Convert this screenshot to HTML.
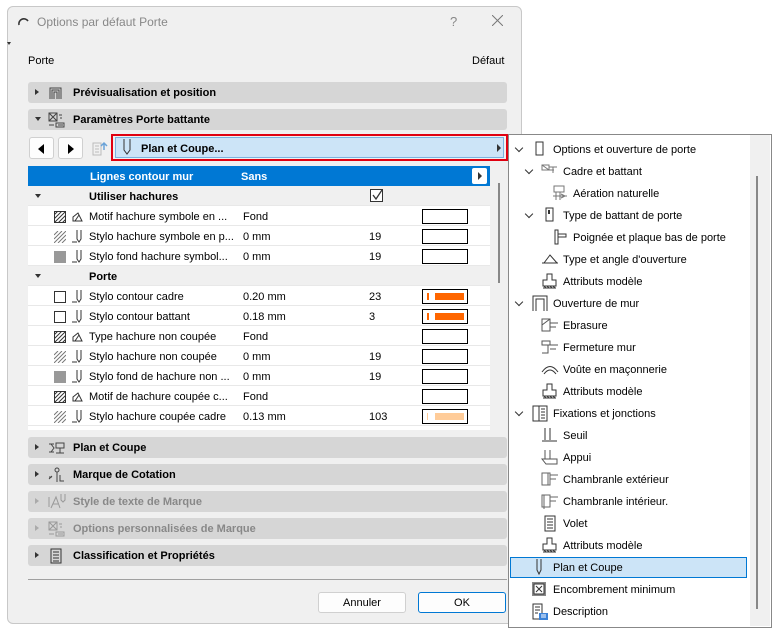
<!DOCTYPE html>
<html><head><meta charset="utf-8"><style>
*{box-sizing:border-box;margin:0;padding:0}
body{width:772px;height:630px;background:#fff;position:relative;overflow:hidden;font-family:"Liberation Sans",sans-serif;font-size:11px;color:#000}
.a{position:absolute}
.dlg{left:7px;top:6px;width:515px;height:618px;background:#f0f0f0;border:1px solid #c8c8c8;border-radius:6px}
.sec{position:absolute;left:28px;width:479px;height:21px;background:#d6d6d6;border-radius:3px;font-weight:bold;font-size:11px;line-height:23px}
.sec .t{position:absolute;left:45px}
.sec .tri{position:absolute;left:7px;top:7px;width:0;height:0;border-left:4px solid #333;border-top:3.5px solid transparent;border-bottom:3.5px solid transparent}
.sec .ic{position:absolute;left:20px;top:3px}
.row{position:absolute;left:28px;width:462px;height:20px;background:#fff;border-bottom:1px solid #e8e8e8;line-height:22px}
.row .n{position:absolute;left:61px}
.row .v{position:absolute;left:215px}
.row .p{position:absolute;left:341px}
.row .sw{position:absolute;left:394px;top:3px;width:46px;height:15px;border:1px solid #000;background:#fff}
.row .i1{position:absolute;left:26px;top:5px;width:12px;height:12px}
.row .i2{position:absolute;left:44px;top:4px}
.grp{background:#f0f0f0;font-weight:bold}
.dn{position:absolute;left:7px;top:8px;border-top:4px solid #333;border-left:3.5px solid transparent;border-right:3.5px solid transparent}
.m{position:absolute;height:22px;line-height:24px;font-size:11px}
.chev{position:absolute;width:6px;height:6px;border-right:1.3px solid #333;border-bottom:1.3px solid #333;transform:rotate(45deg)}
.btn{position:absolute;height:21px;background:#fdfdfd;border:1px solid #d0d0d0;border-radius:3px;text-align:center;line-height:20px}
</style></head><body>
<div class="a dlg"></div>
<svg class="a" style="left:17px;top:15px" width="12" height="12"><path d="M2 10 A5 5 0 0 1 11 6" stroke="#333" stroke-width="1.6" fill="none"/></svg>
<div class="a" style="left:37px;top:15px;font-size:12px;color:#888">Options par défaut Porte</div>
<div class="a" style="left:450px;top:14px;font-size:13px;color:#888">?</div>
<svg class="a" style="left:492px;top:15px" width="11" height="11"><path d="M0 0L11 11M11 0L0 11" stroke="#777" stroke-width="1"/></svg>
<div class="a" style="left:7px;top:42px;border-top:3px solid #333;border-left:2.5px solid transparent;border-right:2.5px solid transparent"></div>
<div class="a" style="left:28px;top:55px">Porte</div>
<div class="a" style="left:472px;top:55px">Défaut</div>

<div class="sec" style="top:82px"><div class="tri"></div><svg class="ic" width="16" height="15"><path d="M2 14V3h11v11M4 14V5h7v9M6 14V7h3v7" stroke="#444" fill="none"/></svg><span class="t">Prévisualisation et position</span></div>
<div class="sec" style="top:109px"><div class="dn"></div><svg class="ic" width="18" height="16"><rect x="1" y="1" width="8" height="8" fill="none" stroke="#444"/><path d="M1 1l8 8M9 1L1 9M11 3h3M12 6h2M8 11h8v4H8zM10 13h5M1 13h5" stroke="#444" fill="none"/></svg><span class="t">Paramètres Porte battante</span></div>

<div class="btn" style="left:29px;top:137px;width:25px;height:22px"><div class="a" style="left:8px;top:6px;border-right:6px solid #000;border-top:5px solid transparent;border-bottom:5px solid transparent"></div></div>
<div class="btn" style="left:58px;top:137px;width:25px;height:22px"><div class="a" style="left:9px;top:6px;border-left:6px solid #000;border-top:5px solid transparent;border-bottom:5px solid transparent"></div></div>
<svg class="a" style="left:91px;top:140px" width="18" height="17"><path d="M2 3h8v12H2zM4 6h4M4 9h4M4 12h4" stroke="#bbb" fill="none"/><path d="M13 10V3M10 6l3-3 3 3" stroke="#6aa3d8" stroke-width="1.5" fill="none"/></svg>
<div class="a" style="left:111px;top:134px;width:397px;height:27px;border:2px solid #e00010"></div>
<div class="a" style="left:115px;top:137px;width:389px;height:21px;background:#cce4f7;border:1px solid #7ab3e0"></div>
<svg class="a" style="left:122px;top:139px" width="10" height="17"><path d="M2 0v11l3 4 3-4V0" stroke="#333" fill="none"/></svg>
<div class="a" style="left:141px;top:143px;font-weight:bold">Plan et Coupe...</div>
<div class="a" style="left:497px;top:144px;border-left:4px solid #333;border-top:4px solid transparent;border-bottom:4px solid transparent"></div>

<div class="a" style="left:28px;top:166px;width:462px;height:20px;background:#0078d4;color:#fff;font-weight:bold;line-height:22px"><span class="a" style="left:62px">Lignes contour mur</span><span class="a" style="left:213px">Sans</span><div class="a" style="left:444px;top:2px;width:15px;height:16px;background:#fff;border-radius:2px"><div class="a" style="left:6px;top:4px;border-left:4px solid #333;border-top:4px solid transparent;border-bottom:4px solid transparent"></div></div></div>
<div class="a" style="left:490px;top:166px;width:17px;height:264px;background:#f0f0f0"></div>
<div class="a" style="left:498px;top:183px;width:2px;height:100px;background:#888"></div>

<div class="row grp" style="top:186px"><div class="dn"></div><span class="n">Utiliser hachures</span><div class="a" style="left:342px;top:3px;width:13px;height:13px;border:1px solid #333;background:#fff"><svg class="a" style="left:1px;top:0" width="11" height="11"><path d="M1 5l3 4 6-9" stroke="#333" stroke-width="1.3" fill="none"/></svg></div></div>
<div id="rows"></div>
<div class="row grp" style="top:266px"><div class="dn"></div><span class="n">Porte</span></div>

<script>
var H='<svg class="i1" viewBox="0 0 12 12"><rect x=".5" y=".5" width="11" height="11" fill="#fff" stroke="#333"/><path d="M0 12L12 0M0 8L8 0M0 4L4 0M4 12L12 4M8 12l4-4" stroke="#333"/></svg>';
var H2='<svg class="i1" viewBox="0 0 12 12"><path d="M0 12L12 0M0 8L8 0M0 4L4 0M4 12L12 4M8 12l4-4" stroke="#777"/></svg>';
var G='<div class="i1" style="background:#999"></div>';
var E='<div class="i1" style="border:1px solid #333;background:#fff"></div>';
var P='<svg class="i2" width="11" height="13"><path d="M5 0v9l2 3 2-3V0M0 12h5" stroke="#333" fill="none"/></svg>';
var F='<svg class="i2" width="11" height="13"><path d="M1 11h9L6 3 1 7z M3 11l4-6" stroke="#333" fill="none"/></svg>';
var rows=[[206,H,F,'Motif hachure symbole en ...','Fond','',0],[226,H2,P,'Stylo hachure symbole en p...','0 mm','19',0],[246,G,P,'Stylo fond hachure symbol...','0 mm','19',0],
[286,E,P,'Stylo contour cadre','0.20 mm','23',1],[306,E,P,'Stylo contour battant','0.18 mm','3',1],[326,H,F,'Type hachure non coupée','Fond','',0],[346,H2,P,'Stylo hachure non coupée','0 mm','19',0],[366,G,P,'Stylo fond de hachure non ...','0 mm','19',0],[386,H,F,'Motif de hachure coupée c...','Fond','',0],[406,H2,P,'Stylo hachure coupée cadre','0.13 mm','103',2]];
var s='';rows.forEach(function(r){var sw='';if(r[6]==1)sw='<div class="a" style="left:4px;top:3px;width:2px;height:7px;background:#f60"></div><div class="a" style="left:12px;top:3px;width:29px;height:7px;background:#f60"></div>';if(r[6]==2)sw='<div class="a" style="left:4px;top:3px;width:1px;height:7px;background:#fc9"></div><div class="a" style="left:12px;top:3px;width:29px;height:7px;background:#fc9"></div>';
s+='<div class="row" style="top:'+r[0]+'px">'+r[1]+r[2]+'<span class="n">'+r[3]+'</span><span class="v">'+r[4]+'</span><span class="p">'+r[5]+'</span><div class="sw">'+sw+'</div></div>';});
s+='<div class="row" style="top:426px;height:4px;border:none"></div>';
document.getElementById('rows').outerHTML=s;
</script>

<div class="sec" style="top:437px"><div class="tri"></div><svg class="ic" width="18" height="15"><path d="M1 4h5M1 12h5M3 4l3 4-3 4M8 3h8v5H8zM12 8v5M8 13h8" stroke="#444" fill="none"/></svg><span class="t">Plan et Coupe</span></div>
<div class="sec" style="top:464px"><div class="tri"></div><svg class="ic" width="18" height="16"><circle cx="9" cy="3" r="2" stroke="#444" fill="none"/><path d="M9 5v10M1 12l3-3M12 8v6h4M1 10h3" stroke="#444" fill="none"/></svg><span class="t">Marque de Cotation</span></div>
<div class="sec" style="top:491px;color:#888"><div class="tri" style="border-left-color:#aaa"></div><svg class="ic" width="18" height="16"><path d="M1 3v10M3 14l5-11 4 11M5 10h5M13 0v6l2 2 2-2V0" stroke="#999" fill="none"/></svg><span class="t">Style de texte de Marque</span></div>
<div class="sec" style="top:518px;color:#888"><div class="tri" style="border-left-color:#aaa"></div><svg class="ic" width="18" height="16"><rect x="1" y="1" width="8" height="8" fill="none" stroke="#999"/><path d="M1 1l8 8M9 1L1 9M11 3h3M12 6h2M8 11h8v4H8zM10 13h5M1 13h5" stroke="#999" fill="none"/></svg><span class="t">Options personnalisées de Marque</span></div>
<div class="sec" style="top:545px"><div class="tri"></div><svg class="ic" width="16" height="16"><path d="M3 1h10v14H3zM5 4h6M5 7h6M5 10h6M5 13h6" stroke="#333" fill="none"/></svg><span class="t">Classification et Propriétés</span></div>
<div class="a" style="left:28px;top:579px;width:479px;height:1px;background:#a0a0a0"></div>
<div class="btn" style="left:318px;top:592px;width:88px">Annuler</div>
<div class="btn" style="left:418px;top:592px;width:88px;border-color:#0078d4">OK</div>

<div class="a" style="left:508px;top:134px;width:264px;height:494px;background:#fff;border:1px solid #888"></div>
<div class="a" style="left:750px;top:135px;width:20px;height:491px;background:#f0f0f0"></div>
<div class="a" style="left:756px;top:176px;width:2px;height:433px;background:#888"></div>
<div class="a" style="left:510px;top:557px;width:237px;height:21px;background:#cce4f7;border:1px solid #0078d4"></div>
<div id="menu"></div>
<script>
var items=[[0,1,'Options et ouverture de porte','<rect x="5" y="1" width="7" height="13" fill="none" stroke="#333"/>'],
[1,1,'Cadre et battant','<path d="M1 2h7v5H1zM1 2l7 5M8 4h8M8 7h5M12 4v6" stroke="#777" fill="none"/>'],
[2,0,'Aération naturelle','<path d="M3 1h10v6H3zM5 7v8M9 7v8M2 11h14M10 9l4 2-4 2" stroke="#777" fill="none"/>'],
[1,1,'Type de battant de porte','<rect x="5" y="1" width="7" height="13" fill="none" stroke="#333"/><rect x="7" y="3" width="2" height="4" fill="#333"/>'],
[2,0,'Poignée et plaque bas de porte','<path d="M4 1h3v14H4zM7 5h8v3H7" stroke="#333" fill="none"/>'],
[1,0,"Type et angle d'ouverture",'<path d="M1 12h16M3 12l6-8 7 8" stroke="#333" fill="none"/>'],
[1,0,'Attributs modèle','<path d="M6 1h5v6h4v6H2V7h4zM2 15h13M3 13l2 2M6 13l2 2M9 13l2 2M12 13l2 2" stroke="#333" fill="none"/>'],
[0,1,'Ouverture de mur','<path d="M2 16V1h14v15M5 16V4h8v12" stroke="#333" fill="none"/>'],
[1,0,'Ebrasure','<path d="M1 2h8v12H1zM1 8l8-6M9 6h8M9 10h6" stroke="#555" fill="none"/>'],
[1,0,'Fermeture mur','<path d="M1 2h8v4H1zM1 6h6v8H1M9 6h8M9 10h6" stroke="#555" fill="none"/>'],
[1,0,'Voûte en maçonnerie','<path d="M1 11Q9 0 17 11M3 13Q9 5 15 13" stroke="#333" fill="none"/>'],
[1,0,'Attributs modèle','<path d="M6 1h5v6h4v6H2V7h4zM2 15h13M3 13l2 2M6 13l2 2M9 13l2 2M12 13l2 2" stroke="#333" fill="none"/>'],
[0,1,'Fixations et jonctions','<path d="M2 1h14v15H2zM8 1v15M10 4h4M10 7h4M10 10h4M10 13h4" stroke="#333" fill="none"/>'],
[1,0,'Seuil','<path d="M4 1v12M9 1v12M1 14h15" stroke="#333" fill="none"/>'],
[1,0,'Appui','<path d="M4 1v9M9 1v9M1 10h15v5H5z" stroke="#555" fill="none"/>'],
[1,0,'Chambranle extérieur','<path d="M1 2h8v12H1zM9 4h8M9 8h6M7 2v12" stroke="#666" fill="none"/>'],
[1,0,'Chambranle intérieur.','<path d="M1 2h8v12H1zM9 4h8M9 8h6M3 2v14" stroke="#666" fill="none"/>'],
[1,0,'Volet','<path d="M4 1h10v15H4zM6 4h6M6 7h6M6 10h6M6 13h6" stroke="#333" fill="none"/>'],
[1,0,'Attributs modèle','<path d="M6 1h5v6h4v6H2V7h4zM2 15h13M3 13l2 2M6 13l2 2M9 13l2 2M12 13l2 2" stroke="#333" fill="none"/>'],
[0,0,'Plan et Coupe','<path d="M6 0v11l2 4 2-4V0" stroke="#333" fill="none"/>'],
[0,0,'Encombrement minimum','<rect x="1" y="1" width="14" height="14" fill="#888"/><rect x="3" y="3" width="10" height="10" fill="#fff" stroke="#333"/><path d="M5 5l6 6M11 5l-6 6" stroke="#333"/>'],
[0,0,'Description','<path d="M2 1h9v15H2zM4 4h5M4 7h5M4 10h3" stroke="#333" fill="none"/><rect x="8" y="10" width="9" height="7" fill="#3b82d8"/><path d="M10 12h5M10 14h5" stroke="#fff"/>']];
var m='';items.forEach(function(it,i){var y=138+i*22;var x=527+it[0]*10;
if(it[1])m+='<div class="chev" style="left:'+(x-11)+'px;top:'+(y+7)+'px"></div>';
m+='<svg class="a" style="left:'+(x+4)+'px;top:'+(y+3)+'px" width="18" height="17">'+it[3]+'</svg>';
m+='<div class="m" style="left:'+(x+26)+'px;top:'+y+'px">'+it[2]+'</div>';});
document.getElementById('menu').outerHTML=m;
</script>
</body></html>
